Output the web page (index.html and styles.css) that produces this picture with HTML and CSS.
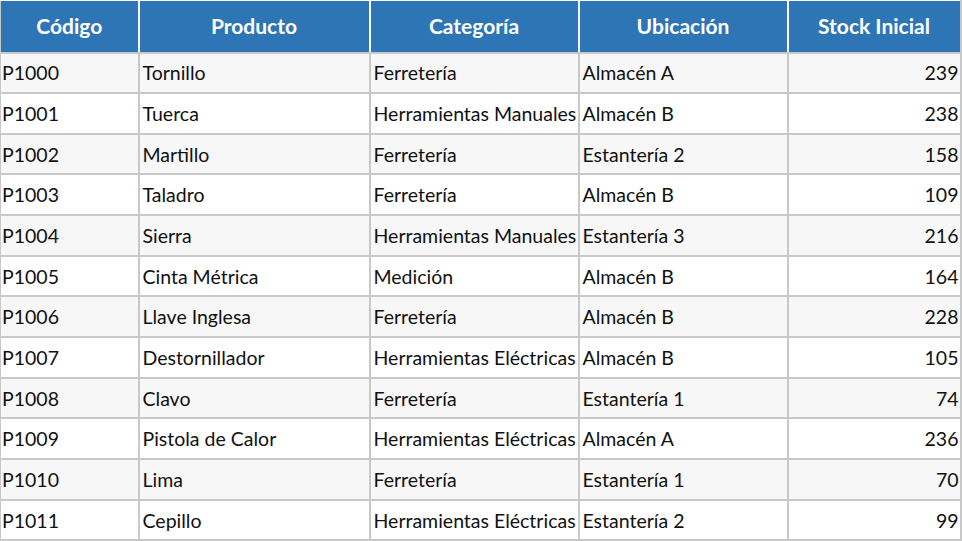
FILE: index.html
```html
<!DOCTYPE html>
<html lang="es">
<head>
<meta charset="utf-8">
<title>Inventario</title>
<link rel="stylesheet" href="styles.css">
</head>
<body>
<table class="grid">
  <colgroup>
    <col class="c-code"><col class="c-prod"><col class="c-cat"><col class="c-loc"><col class="c-stock">
  </colgroup>
  <thead>
    <tr><th>Código</th><th>Producto</th><th>Categoría</th><th>Ubicación</th><th>Stock Inicial</th></tr>
  </thead>
  <tbody>
    <tr><td>P1000</td><td>Tornillo</td><td>Ferretería</td><td>Almacén A</td><td class="num">239</td></tr>
    <tr><td>P1001</td><td>Tuerca</td><td>Herramientas Manuales</td><td>Almacén B</td><td class="num">238</td></tr>
    <tr><td>P1002</td><td>Martillo</td><td>Ferretería</td><td>Estantería 2</td><td class="num">158</td></tr>
    <tr><td>P1003</td><td>Taladro</td><td>Ferretería</td><td>Almacén B</td><td class="num">109</td></tr>
    <tr><td>P1004</td><td>Sierra</td><td>Herramientas Manuales</td><td>Estantería 3</td><td class="num">216</td></tr>
    <tr><td>P1005</td><td>Cinta Métrica</td><td>Medición</td><td>Almacén B</td><td class="num">164</td></tr>
    <tr><td>P1006</td><td>Llave Inglesa</td><td>Ferretería</td><td>Almacén B</td><td class="num">228</td></tr>
    <tr><td>P1007</td><td>Destornillador</td><td>Herramientas Eléctricas</td><td>Almacén B</td><td class="num">105</td></tr>
    <tr><td>P1008</td><td>Clavo</td><td>Ferretería</td><td>Estantería 1</td><td class="num">74</td></tr>
    <tr><td>P1009</td><td>Pistola de Calor</td><td>Herramientas Eléctricas</td><td>Almacén A</td><td class="num">236</td></tr>
    <tr><td>P1010</td><td>Lima</td><td>Ferretería</td><td>Estantería 1</td><td class="num">70</td></tr>
    <tr><td>P1011</td><td>Cepillo</td><td>Herramientas Eléctricas</td><td>Estantería 2</td><td class="num">99</td></tr>
  </tbody>
</table>
</body>
</html>
```
FILE: styles.css
```css
html, body {
  margin: 0;
  padding: 0;
  background: #ffffff;
}
body {
  font-family: Lato, "Liberation Sans", sans-serif;
  font-size: 19.5px;
  color: #111111;
}
.grid {
  border-collapse: collapse;
  table-layout: fixed;
  width: 960px;
}
.c-code { width: 138px; }
.c-prod { width: 231px; }
.c-cat { width: 209px; }
.c-loc { width: 209px; }
.c-stock { width: 173px; }
.grid th {
  background: #2e75b6;
  color: #ffffff;
  font-weight: bold;
  font-size: 21px;
  height: 52px;
  padding: 0 2px 2px;
  text-align: center;
  border: 2px solid #ffffff;
  border-top-width: 1px;
  border-bottom: 2px solid #c8c8c8;
  box-sizing: border-box;
}
.grid th:first-child { border-left: 1px solid #c8c8c8; }
.grid th:last-child { border-right: 2px solid #c8c8c8; }
.grid td {
  height: 40.67px;
  padding: 0 1px 0 3px;
  border: 2px solid #c8c8c8;
  white-space: nowrap;
  overflow: hidden;
  box-sizing: border-box;
}
.grid td:first-child {
  border-left-width: 1px;
  padding-left: 1px;
}
.grid tbody tr:nth-child(odd) td { background: #f7f7f7; }
.grid tbody tr:nth-child(even) td { background: #ffffff; }
.grid td.num { text-align: right; }
```
